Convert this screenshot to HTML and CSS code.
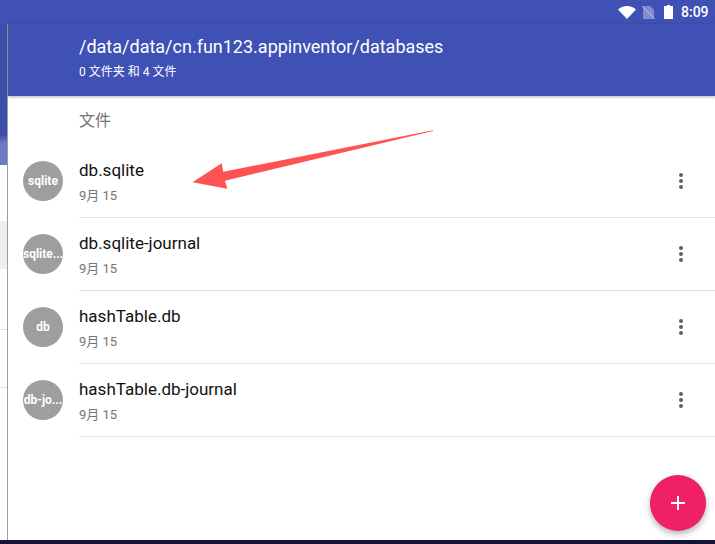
FILE: index.html
```html
<!DOCTYPE html>
<html lang="zh">
<head>
    <meta charset="UTF-8">
    <title>databases</title>
    <link rel="stylesheet" href="styles.css">
</head>
<body>
    <div class="status-bar">
        <svg class="icon-wifi" width="18" height="13" viewBox="0 0 18 13"><path d="M0 3.6C2.4 1.4 5.5 0 9 0s6.600 1.400 9 3.600L9 13z" fill="#fff"/></svg>
        <svg class="icon-sim" width="13" height="13" viewBox="0 0 13 13">
            <path d="M1 0h7l4 4v9H1z" fill="#fff" fill-opacity=".35"/>
            <path d="M0 0l13 13" stroke="#fff" stroke-opacity=".45" stroke-width="1"/>
        </svg>
        <svg class="icon-battery" width="9" height="14" viewBox="0 0 9 14"><path d="M3 0h3v1h3v13H0V1h3z" fill="#fff"/></svg>
        <span class="clock">8:09</span>
    </div>

    <div class="content">
        <!-- edge of the drawer behind -->
        <div class="side">
            <div class="side-hero"></div>
            <div class="side-item"></div>
            <div class="side-line first"></div>
            <div class="side-line second"></div>
        </div>

        <div class="main">
            <div class="header">
                <div class="path">/data/data/cn.fun123.appinventor/databases</div>
                <div class="counts">0 文件夹 和 4 文件</div>
            </div>

            <div class="section-title">文件</div>

            <div class="file-row">
                <div class="avatar">sqlite</div>
                <div class="file-body">
                    <div class="file-text">
                        <div class="file-name">db.sqlite</div>
                        <div class="file-date">9月 15</div>
                    </div>
                    <div class="more"><i></i><i></i><i></i></div>
                </div>
            </div>
            <div class="file-row">
                <div class="avatar">sqlite...</div>
                <div class="file-body">
                    <div class="file-text">
                        <div class="file-name">db.sqlite-journal</div>
                        <div class="file-date">9月 15</div>
                    </div>
                    <div class="more"><i></i><i></i><i></i></div>
                </div>
            </div>
            <div class="file-row">
                <div class="avatar">db</div>
                <div class="file-body">
                    <div class="file-text">
                        <div class="file-name">hashTable.db</div>
                        <div class="file-date">9月 15</div>
                    </div>
                    <div class="more"><i></i><i></i><i></i></div>
                </div>
            </div>
            <div class="file-row">
                <div class="avatar">db-jo...</div>
                <div class="file-body">
                    <div class="file-text">
                        <div class="file-name">hashTable.db-journal</div>
                        <div class="file-date">9月 15</div>
                    </div>
                    <div class="more"><i></i><i></i><i></i></div>
                </div>
            </div>
        </div>
    </div>

    <div class="nav-edge"></div>

    <!-- annotation drawn over the list -->
    <svg class="arrow" width="715" height="544" viewBox="0 0 715 544">
        <path d="M192.500 182.300L221.700 163.300L223.300 171.700L433 130.300L433 131L225 180.700L227.300 188.700z" fill="#ff5252"/>
    </svg>

    <div class="fab"><span class="fab-h"></span><span class="fab-v"></span></div>
</body>
</html>
```

FILE: styles.css
```css
* {
    box-sizing: border-box;
}

html, body {
    margin: 0;
    height: 544px;
    overflow: hidden;
}

body {
    display: flex;
    flex-direction: column;
    position: relative;
    background-color: #fff;
    font-family: Roboto, "Noto Sans CJK SC", sans-serif;
}

.status-bar {
    display: flex;
    align-items: center;
    justify-content: flex-end;
    height: 24px;
    padding-right: 5px;
    background-color: #3f51b5;
}

.icon-wifi {
    margin-right: 6px;
}

.icon-sim {
    margin-right: 9px;
}

.icon-battery {
    margin-right: 8px;
}

.clock {
    width: 29px;
    color: #fff;
    font-size: 14px;
    font-weight: 500;
}

.content {
    display: flex;
    flex: 1;
    min-height: 0;
}

.side {
    display: flex;
    flex-direction: column;
    flex: none;
    width: 8px;
    border-right: 1px solid #9e9e9e;
}

.side-hero {
    height: 141px;
    background: linear-gradient(168deg, #3c4dab 0 78%, #6c79c3 84% 100%);
}

.side-item {
    height: 48px;
    margin-top: 56px;
    background-color: #eee;
}

.side-line {
    height: 1px;
    background-color: #e0e0e0;
}

.side-line.first {
    margin-top: 60px;
}

.side-line.second {
    margin-top: 57px;
}

.main {
    flex: 1;
    min-width: 0;
}

.header {
    position: relative;
    height: 72px;
    padding: 12px 0 0 71px;
    background-color: #3f51b5;
    box-shadow: 0 1px 3px rgba(0, 0, 0, 0.3);
    color: #fff;
}

.path {
    font-size: 18px;
    line-height: 22px;
}

.counts {
    margin-top: 6px;
    font-size: 12px;
    line-height: 16px;
}

.section-title {
    height: 49px;
    padding: 14px 0 0 71px;
    color: #757575;
    font-size: 16px;
    line-height: 22px;
}

.file-row {
    display: flex;
    height: 73px;
    padding-left: 15px;
}

.avatar {
    flex: none;
    width: 40px;
    height: 40px;
    margin-top: 16px;
    border-radius: 50%;
    background-color: #9e9e9e;
    color: #fff;
    font-size: 12px;
    font-weight: 700;
    line-height: 40px;
    text-align: center;
    white-space: nowrap;
    overflow: hidden;
}

.file-body {
    display: flex;
    flex: 1;
    margin-left: 16px;
    border-bottom: 1px solid #e0e0e0;
}

.file-text {
    flex: 1;
    padding-top: 13px;
}

.file-name {
    color: #111;
    font-size: 17px;
    line-height: 24px;
}

.file-date {
    margin-top: 5px;
    color: #757575;
    font-size: 13px;
    line-height: 18px;
}

.more {
    display: flex;
    flex-direction: column;
    flex: none;
    justify-content: center;
    align-items: center;
    gap: 2px;
    width: 4px;
    margin-right: 32px;
}

.more i {
    width: 4px;
    height: 4px;
    border-radius: 50%;
    background-color: #616161;
}

.nav-edge {
    height: 4px;
    background-color: #12123a;
}

.arrow {
    position: absolute;
    top: 0;
    left: 0;
    pointer-events: none;
}

.fab {
    position: absolute;
    top: 475px;
    left: 650px;
    width: 56px;
    height: 56px;
    border-radius: 50%;
    background-color: #ef2066;
    box-shadow: 0 3px 6px rgba(0, 0, 0, 0.3);
}

.fab-h, .fab-v {
    position: absolute;
    background-color: #fff;
}

.fab-h {
    top: 27px;
    left: 21px;
    width: 14px;
    height: 2px;
}

.fab-v {
    top: 21px;
    left: 27px;
    width: 2px;
    height: 14px;
}
```
